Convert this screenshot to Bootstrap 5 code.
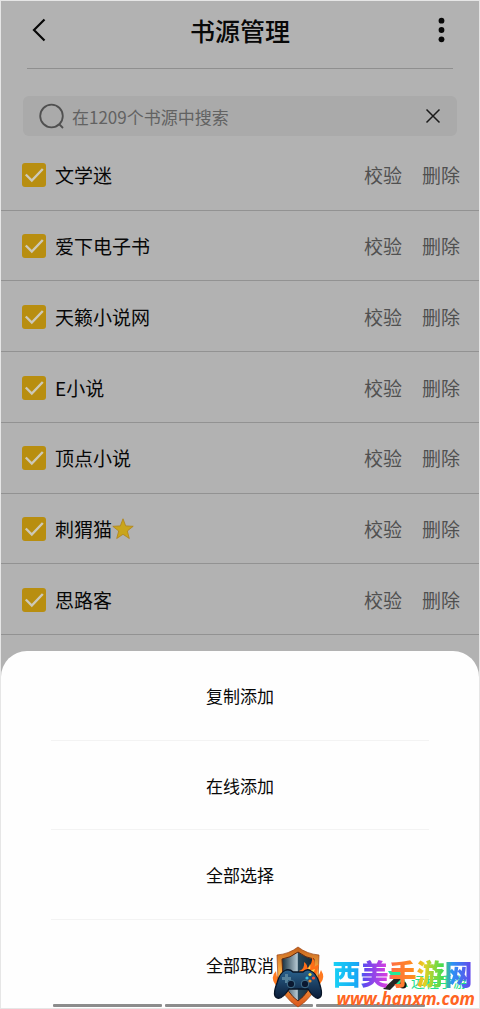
<!DOCTYPE html>
<html lang="zh-CN">
<head>
<meta charset="utf-8">
<meta name="viewport" content="width=device-width, initial-scale=1">
<title>书源管理</title>
<link href="https://cdn.jsdelivr.net/npm/bootstrap@5.3.0/dist/css/bootstrap.min.css" rel="stylesheet">
<style>
body{font-family:"Noto Sans CJK SC",sans-serif;font-size:19px;line-height:28px;color:#080808;background:#b2b2b2}
.screen{border:1px solid #e6e6e6}
.topbar{height:68px;margin:0 26px;border-bottom:1px solid #8f8f8f;padding-bottom:10px}
.topbar h1{font-size:25px;line-height:36px;font-weight:500}
.plain-btn{border:0;background:none;padding:0;color:inherit;line-height:inherit}
.plain-btn svg{display:block}
.search{height:40px;margin:27px 22px 4px;border-radius:6px;background:#aaa;padding:0 16px 0 15px}
.search input{font-size:17px;color:#626262;min-width:0;margin-left:-2px;padding:2px 0 0}
.search input::placeholder{color:#626262;opacity:1}
.sources{height:495px}
.source{border-bottom:1px solid #929292;padding:1px 19px 0 21px}
.source label{margin-left:9px}
.source .form-check-input{width:24px;height:24px;border:0;border-radius:3px;background-color:#b88e10}
.source .form-check-input:checked{background-color:#b88e10;background-size:100% 100%;background-image:url("data:image/svg+xml,%3csvg xmlns='http://www.w3.org/2000/svg' viewBox='0 0 24 24'%3e%3cpath d='M3.800 11.500l6 6L20.800 6' fill='none' stroke='%23cdc9b9' stroke-width='2.400'/%3e%3c/svg%3e")}
.source .plain-btn{color:#505050}
.actions{gap:20px}
.sheet{height:357px;margin-top:16px;background:#fefefe;border-radius:26px 26px 0 0}
.sheet .plain-btn{font-size:17px;margin:0 50px;padding-top:2px;border-bottom:1px solid #f3f3f3}
.sheet .plain-btn:last-of-type{border-bottom:0}
.nav-bars{left:52px;right:54px;bottom:1px;height:3px;gap:3px}
.nav-bars span{background:#8c8c8c;border-radius:1px;flex:110}
.nav-bars .wide{flex:150}
.brand{right:4px;bottom:0;gap:8px}
.brand-name{font-size:28px;line-height:34px;font-weight:900;background:linear-gradient(90deg,#18d2f5 0%,#18a8f5 17%,#6048ee 22%,#d83ee0 38%,#ff7040 42%,#ff8a20 56%,#e8d020 64%,#48dc50 77%,#2b92f5 84%,#7038e8 100%);-webkit-background-clip:text;background-clip:text;color:transparent}
.brand-url{font:italic bold 17px/18px "Open Sans",sans-serif;color:#ff6422;margin-left:4px}
.under-mark{right:12px;bottom:16px;font-size:14px;line-height:20px;color:#22df8c}
</style>
</head>
<body>
<div class="screen d-flex flex-column min-vh-100 position-relative overflow-hidden">
<header class="topbar d-flex align-items-center justify-content-between">
<button class="plain-btn" aria-label="返回"><svg width="24" height="28" viewBox="0 0 24 28" fill="none" stroke="#080808" stroke-width="2.200"><path d="M17.500 3.500 7 14l10.500 10.500"/></svg></button>
<h1 class="m-0">书源管理</h1>
<button class="plain-btn" aria-label="更多"><svg width="24" height="28" viewBox="0 0 24 28" fill="#080808"><circle cx="12.500" cy="4.700" r="2.900"/><circle cx="12.500" cy="14" r="2.900"/><circle cx="12.500" cy="23.300" r="2.900"/></svg></button>
</header>
<form class="search d-flex align-items-center gap-2">
<svg class="flex-shrink-0" width="28" height="28" viewBox="0 0 28 28" fill="none" stroke="#505050" stroke-width="1.800"><circle cx="13.500" cy="14" r="11.300"/><path d="m21 22 4 4"/></svg>
<input class="flex-grow-1 border-0 bg-transparent" type="text" aria-label="搜索书源" placeholder="在1209个书源中搜索">
<button class="plain-btn" type="button" aria-label="清除"><svg width="16" height="16" viewBox="0 0 16 16" fill="none" stroke="#1a1a1a" stroke-width="1.500"><path d="m1.500 1.500 13 13m0-13-13 13"/></svg></button>
</form>
<main class="sources d-flex flex-column">
<div class="source d-flex align-items-center flex-fill"><input class="form-check-input m-0" type="checkbox" id="s1" checked><label class="me-auto" for="s1">文学迷</label><div class="actions d-flex"><button class="plain-btn">校验</button><button class="plain-btn">删除</button></div></div>
<div class="source d-flex align-items-center flex-fill"><input class="form-check-input m-0" type="checkbox" id="s2" checked><label class="me-auto" for="s2">爱下电子书</label><div class="actions d-flex"><button class="plain-btn">校验</button><button class="plain-btn">删除</button></div></div>
<div class="source d-flex align-items-center flex-fill"><input class="form-check-input m-0" type="checkbox" id="s3" checked><label class="me-auto" for="s3">天籁小说网</label><div class="actions d-flex"><button class="plain-btn">校验</button><button class="plain-btn">删除</button></div></div>
<div class="source d-flex align-items-center flex-fill"><input class="form-check-input m-0" type="checkbox" id="s4" checked><label class="me-auto" for="s4">E小说</label><div class="actions d-flex"><button class="plain-btn">校验</button><button class="plain-btn">删除</button></div></div>
<div class="source d-flex align-items-center flex-fill"><input class="form-check-input m-0" type="checkbox" id="s5" checked><label class="me-auto" for="s5">顶点小说</label><div class="actions d-flex"><button class="plain-btn">校验</button><button class="plain-btn">删除</button></div></div>
<div class="source d-flex align-items-center flex-fill"><input class="form-check-input m-0" type="checkbox" id="s6" checked><label class="me-auto d-flex align-items-center" for="s6">刺猬猫<svg width="22" height="22" viewBox="0 0 22 22"><path d="m11 .8 2.700 7.100 7.500.4-5.900 4.700 2 7.500-6.300-4.200-6.300 4.200 2-7.500L.8 8.300l7.500-.4z" fill="#c9a51c" stroke="#b08318" stroke-width=".8" stroke-linejoin="round"/></svg></label><div class="actions d-flex"><button class="plain-btn">校验</button><button class="plain-btn">删除</button></div></div>
<div class="source d-flex align-items-center flex-fill"><input class="form-check-input m-0" type="checkbox" id="s7" checked><label class="me-auto" for="s7">思路客</label><div class="actions d-flex"><button class="plain-btn">校验</button><button class="plain-btn">删除</button></div></div>
</main>
<section class="sheet d-flex flex-column">
<button class="plain-btn flex-fill">复制添加</button>
<button class="plain-btn flex-fill">在线添加</button>
<button class="plain-btn flex-fill">全部选择</button>
<button class="plain-btn flex-fill">全部取消</button>
</section>
<div class="nav-bars position-absolute d-flex"><span></span><span class="wide"></span><span></span></div>
<div class="under-mark position-absolute d-flex align-items-center"><svg width="28" height="22" viewBox="0 0 28 22"><path d="M5 1h12l8 16H15z" fill="#20e89a"/><path d="M0 19 14 6l4 3-11 11z" fill="#252525"/><circle cx="20" cy="15" r="3.500" fill="#151515"/><circle cx="20" cy="15" r="1.200" fill="#38c080"/></svg><span>远程手游</span></div>
<div class="brand position-absolute d-flex align-items-end">
<svg width="54" height="62" viewBox="0 0 54 62">
<defs>
<linearGradient id="rim" x2="0" y2="1"><stop stop-color="#c4601a"/><stop offset=".45" stop-color="#ffb648"/><stop offset="1" stop-color="#d9541b"/></linearGradient>
<linearGradient id="steel"><stop stop-color="#16303f"/><stop offset=".48" stop-color="#b5c8d2"/><stop offset=".5" stop-color="#27475a"/><stop offset="1" stop-color="#142735"/></linearGradient>
<linearGradient id="pad" x2="0" y2="1"><stop stop-color="#2a638f"/><stop offset="1" stop-color="#0b1c38"/></linearGradient>
</defs>
<path d="M4 38Q-1 31 5 25l1 6 3-4v20zm45 0q6-6 1-14l-2 5-4-4-1 22z" fill="#ff7a20"/>
<path d="M27 1q9 7 21 8l-1 25Q43 51 27 61 11 51 7 34L6 9q12-1 21-8z" fill="url(#rim)" stroke="#9c4514" stroke-width=".7"/>
<path d="M27 6q8 6 16 7l-1 20Q38 47 27 55 16 47 12 33l-1-20q8-1 16-7z" fill="url(#steel)" stroke="#5b2815"/>
<path d="M28 25q6-2 5-9 4 3 3 6 6-4 5-11 4 5 2 10l5-3-4 16-16 2z" fill="#ff6e18"/><path d="M33 26q5-2 6-8 1 5-1 7l6-2-3 7z" fill="#ffd047"/>
<path d="M15 24q4-1 7 2h10q4-4 8-1 5 2 8 11 5 14 0 16-4 2-11-9H18Q11 54 6 52q-5-2 0-15 3-11 9-13z" fill="url(#pad)" stroke="#081426" stroke-width="1.300"/>
<path d="M11 31h3v-3h3v3h3v3h-3v3h-3v-3h-3z" fill="#55819b"/>
<circle cx="20" cy="38" r="3.800" fill="#0a1830" stroke="#43728e"/><circle cx="34" cy="38" r="3.800" fill="#0a1830" stroke="#43728e"/>
<circle cx="39" cy="28.500" r="1.600" fill="#ffd83b"/><circle cx="36" cy="32" r="1.600" fill="#39bce0"/><circle cx="42.500" cy="32" r="1.600" fill="#f0503c"/><circle cx="39" cy="35" r="1.600" fill="#e88b30"/>
</svg>
<div><div class="brand-name">西美手游网</div><div class="brand-url">www.hanxm.com</div></div>
</div>
</div>
<script src="https://cdn.jsdelivr.net/npm/bootstrap@5.3.0/dist/js/bootstrap.bundle.min.js"></script>
</body>
</html>
